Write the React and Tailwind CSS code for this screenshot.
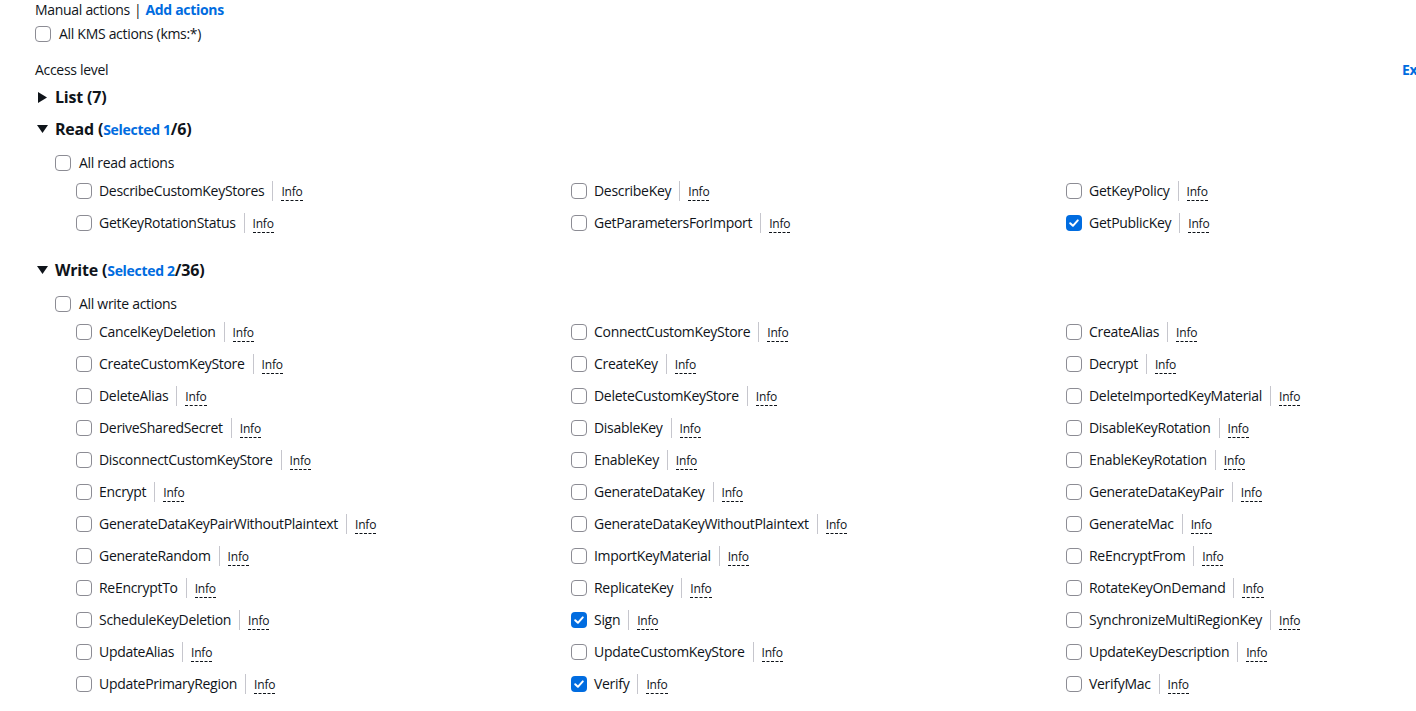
import React from "react";

const FONT = { fontFamily: '"Open Sans", "Noto Sans", Arial, sans-serif' };

function Checkbox({ checked }) {
  if (checked) {
    return (
      <span className="flex h-4 w-4 shrink-0 items-center justify-center rounded-[4px] bg-[#006ce0]">
        <svg width="12" height="12" viewBox="0 0 12 12" fill="none">
          <path d="M2.2 6.2 L4.9 8.8 L9.8 3.4" stroke="white" strokeWidth="2" strokeLinecap="round" strokeLinejoin="round" />
        </svg>
      </span>
    );
  }
  return <span className="h-4 w-4 shrink-0 rounded-[4px] border-[1.5px] border-[#8c8c94] bg-white" />;
}

function Item({ name, checked }) {
  return (
    <div className="flex h-8 items-center whitespace-nowrap">
      <Checkbox checked={checked} />
      <span className="ml-[7px] text-[14px] leading-5 tracking-[-0.3px] text-[#0f141a]">{name}</span>
      <span className="ml-2 h-5 w-px bg-[#c6c6cd]" />
      <span className="ml-[8px] mt-[2px] border-b border-dashed border-[#0f141a] text-[12px] font-medium leading-4 tracking-[-0.2px] text-[#0f141a]">
        Info
      </span>
    </div>
  );
}

function Triangle({ open }) {
  return open ? (
    <svg width="11" height="8" viewBox="0 0 11 8" className="shrink-0">
      <path d="M0 0 H11 L5.5 8 Z" fill="#0f141a" />
    </svg>
  ) : (
    <svg width="9" height="11" viewBox="0 0 9 11" className="shrink-0">
      <path d="M0 0 L9 5.5 L0 11 Z" fill="#0f141a" />
    </svg>
  );
}

function Header({ open, title, selected, total, className }) {
  return (
    <div className={"flex h-6 items-center whitespace-nowrap " + className}>
      <span className={"flex w-[20px] " + (open ? "pl-[2px]" : "pl-[3px]")}>
        <Triangle open={open} />
      </span>
      <span className="text-[16px] font-bold leading-6 tracking-[-0.2px] text-[#0f141a]">
        {title}
        {total !== undefined && selected === undefined ? ` (${total})` : null}
        {selected !== undefined ? (
          <>
            {" ("}
            <span className="text-[14px] tracking-[-0.3px] text-[#006ce0]">Selected {selected}</span>/{total})
          </>
        ) : null}
      </span>
    </div>
  );
}

const READ = [
  ["DescribeCustomKeyStores"],
  ["DescribeKey"],
  ["GetKeyPolicy"],
  ["GetKeyRotationStatus"],
  ["GetParametersForImport"],
  ["GetPublicKey", true],
];

const WRITE = [
  ["CancelKeyDeletion"], ["ConnectCustomKeyStore"], ["CreateAlias"],
  ["CreateCustomKeyStore"], ["CreateKey"], ["Decrypt"],
  ["DeleteAlias"], ["DeleteCustomKeyStore"], ["DeleteImportedKeyMaterial"],
  ["DeriveSharedSecret"], ["DisableKey"], ["DisableKeyRotation"],
  ["DisconnectCustomKeyStore"], ["EnableKey"], ["EnableKeyRotation"],
  ["Encrypt"], ["GenerateDataKey"], ["GenerateDataKeyPair"],
  ["GenerateDataKeyPairWithoutPlaintext"], ["GenerateDataKeyWithoutPlaintext"], ["GenerateMac"],
  ["GenerateRandom"], ["ImportKeyMaterial"], ["ReEncryptFrom"],
  ["ReEncryptTo"], ["ReplicateKey"], ["RotateKeyOnDemand"],
  ["ScheduleKeyDeletion"], ["Sign", true], ["SynchronizeMultiRegionKey"],
  ["UpdateAlias"], ["UpdateCustomKeyStore"], ["UpdateKeyDescription"],
  ["UpdatePrimaryRegion"], ["Verify", true], ["VerifyMac"],
];

function Grid({ items }) {
  return (
    <div className="ml-[41px] grid w-[1485px] grid-cols-3">
      {items.map(([n, c]) => (
        <Item key={n} name={n} checked={c} />
      ))}
    </div>
  );
}

export default function App() {
  return (
    <div className="h-[711px] w-[1416px] overflow-hidden bg-white text-[#0f141a]" style={FONT}>
      <div className="pl-[35px]">
        <div className="flex h-5 items-center whitespace-nowrap text-[14px] leading-5 tracking-[-0.3px]">
          <span>Manual actions</span>
          <span className="ml-1">|</span>
          <a className="ml-1 font-bold text-[#006ce0]">Add actions</a>
        </div>
        <div className="mt-[2px] flex h-6 items-center whitespace-nowrap">
          <Checkbox />
          <span className="ml-2 text-[14px] leading-5 tracking-[-0.3px]">All KMS actions (kms:*)</span>
        </div>
        <div className="mt-[14px] flex h-5 items-center whitespace-nowrap text-[14px] leading-5 tracking-[-0.3px]">
          <span className="w-[1367px] shrink-0">Access level</span>
          <a className="font-bold text-[#006ce0]">Expand all</a>
        </div>
        <Header open={false} title="List" total={7} className="mt-[5px]" />
        <Header open={true} title="Read" selected={1} total={6} className="mt-[8px]" />
        <div className="ml-5 mt-[10px] flex h-6 items-center whitespace-nowrap">
          <Checkbox />
          <span className="ml-2 text-[14px] leading-5 tracking-[-0.3px]">All read actions</span>
        </div>
        <Grid items={READ} />
        <Header open={true} title="Write" selected={2} total={36} className="mt-[19px]" />
        <div className="ml-5 mt-[10px] flex h-6 items-center whitespace-nowrap">
          <Checkbox />
          <span className="ml-2 text-[14px] leading-5 tracking-[-0.3px]">All write actions</span>
        </div>
        <Grid items={WRITE} />
      </div>
    </div>
  );
}
